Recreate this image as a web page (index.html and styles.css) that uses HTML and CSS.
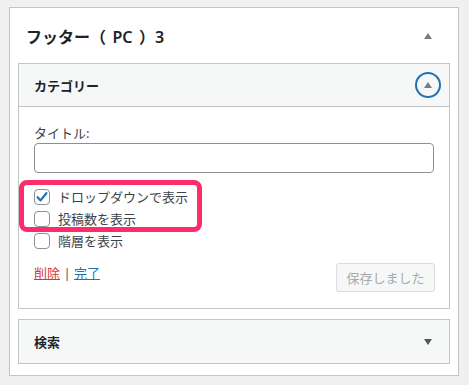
FILE: index.html
```html
<!DOCTYPE html>
<html lang="ja">
<head>
<meta charset="utf-8">
<link rel="stylesheet" href="styles.css">
</head>
<body>
<div class="sidebar">
  <div class="sidebar-head">
    <h2 class="sidebar-title">フッター（<span class="pc">PC</span>）3</h2>
    <span class="tri tri-up"></span>
  </div>
  <div class="sidebar-body">
    <div class="widget">
      <div class="widget-top">
        <span class="widget-title">カテゴリー</span>
        <span class="toggle"><span class="tri tri-up"></span></span>
      </div>
      <div class="widget-inside">
        <label class="field-label">タイトル:</label>
        <input class="text-input" type="text">
        <div class="checklist">
          <div class="check-row">
            <span class="checkbox checked"><svg viewBox="0 0 16 16" width="16" height="16"><path d="M3.6 8.2 L6.6 11.4 L12.4 4.2" fill="none" stroke="#2271b1" stroke-width="2.2" stroke-linecap="round" stroke-linejoin="round"/></svg></span>
            <span class="check-label">ドロップダウンで表示</span>
          </div>
          <div class="check-row">
            <span class="checkbox"></span>
            <span class="check-label">投稿数を表示</span>
          </div>
          <div class="check-row">
            <span class="checkbox"></span>
            <span class="check-label">階層を表示</span>
          </div>
          <div class="highlight"></div>
        </div>
        <div class="actions">
          <div class="links"><a class="link-delete">削除</a> <span class="sep">|</span> <a class="link-done">完了</a></div>
          <span class="save-btn">保存しました</span>
        </div>
      </div>
    </div>
    <div class="widget closed">
      <div class="widget-top">
        <span class="widget-title">検索</span>
        <span class="tri tri-down"></span>
      </div>
    </div>
  </div>
</div>
</body>
</html>
```

FILE: styles.css
```css
* { box-sizing: border-box; }
html, body { margin: 0; }
body {
  background: #f0f0f1;
  padding: 7px 0 0 9px;
  font-family: "Noto Sans", "Noto Sans CJK JP", sans-serif;
  font-size: 13px;
  color: #1d2327;
  width: 469px;
  height: 385px;
  overflow: hidden;
}
.sidebar {
  width: 450px;
  height: 369px;
  background: #fff;
  border: 1px solid #c3c4c7;
}
.sidebar-head {
  height: 55px;
  display: flex;
  align-items: center;
  justify-content: space-between;
  padding: 0 26px 0 16px;
}
.sidebar-title {
  margin: 0;
  font-size: 16px;
  font-weight: 600;
  line-height: 1;
  padding-top: 2px;
}
.pc { margin: 0 6.5px; }
.tri {
  display: block;
  width: 0;
  height: 0;
  border-left: 4.5px solid transparent;
  border-right: 4.5px solid transparent;
}
.tri-up { border-bottom: 6px solid #787c82; }
.tri-down { border-top: 6px solid #50575e; }
.sidebar-body {
  padding: 0 8px 10px;
  display: flex;
  flex-direction: column;
  gap: 10px;
}
.widget {
  border: 1px solid #c3c4c7;
  background: #fff;
}
.widget-top {
  height: 43px;
  background: #f6f7f7;
  display: flex;
  align-items: center;
  justify-content: space-between;
  padding: 0 17px 0 15px;
  border-bottom: 1px solid #c3c4c7;
}
.widget.closed .widget-top { height: 43px; border-bottom: none; padding-right: 17px; }
.widget-title {
  font-size: 13px;
  font-weight: 600;
}
.widget:first-child .widget-top { padding-right: 8px; }
.toggle {
  width: 26px;
  height: 26px;
  border: 2px solid #2271b1;
  border-radius: 50%;
  display: flex;
  align-items: center;
  justify-content: center;
}
.toggle .tri { margin-top: -1px; }
.widget-inside {
  padding: 17px 15px 16px;
}
.field-label {
  display: block;
  line-height: 19px;
  color: #3c434a;
}
.text-input {
  display: block;
  width: 400px;
  height: 30px;
  margin: 0;
  border: 1px solid #8c8f94;
  border-radius: 4px;
  background: #fff;
  padding: 0 8px;
}
.checklist {
  position: relative;
  margin-top: 13px;
}
.check-row {
  height: 22px;
  display: flex;
  align-items: center;
  gap: 8px;
}
.checkbox {
  width: 16px;
  height: 16px;
  border: 1px solid #8c8f94;
  border-radius: 4px;
  background: #fff;
  position: relative;
  flex: none;
}
.checkbox svg {
  position: absolute;
  left: -1px;
  top: -1px;
}
.check-label {
  color: #3c434a;
  line-height: 22px;
}
.highlight {
  position: absolute;
  left: -15px;
  top: -6px;
  width: 183px;
  height: 52px;
  border: 5px solid #fd2c6b;
  border-radius: 8px;
}
.actions {
  margin-top: 11px;
  display: flex;
  justify-content: space-between;
  align-items: flex-start;
}
.links {
  line-height: 20px;
  color: #8c8f94;
}
.link-delete { color: #d63638; text-decoration: underline; }
.link-done { color: #2271b1; text-decoration: underline; }
.sep { color: #50575e; }
.save-btn {
  height: 29px;
  width: 99px;
  margin-right: -1px;
  display: flex;
  align-items: center;
  justify-content: center;
  background: #f6f7f7;
  border: 1px solid #dcdcde;
  border-radius: 3px;
  color: #a7aaad;
}
```
